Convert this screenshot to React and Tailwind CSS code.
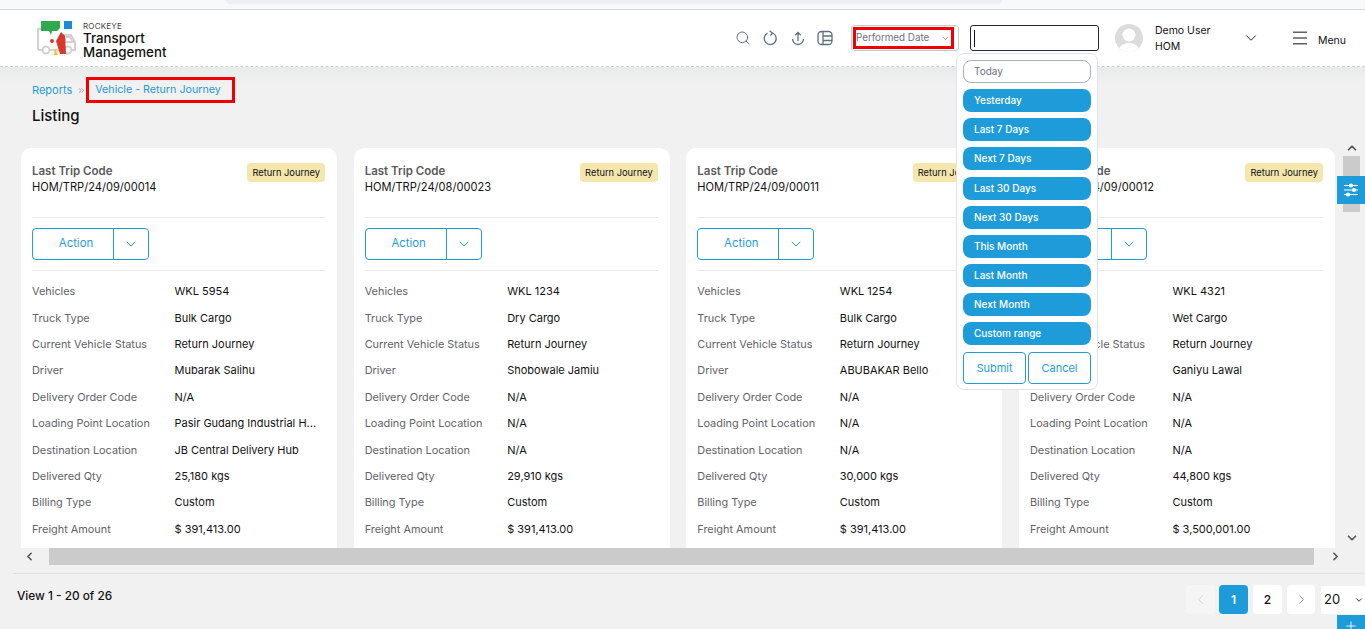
import React from "react";
import { Search, ChevronDown, ChevronUp, ChevronLeft, ChevronRight, Menu, Plus, ChevronsRight } from "lucide-react";

const cards = [
  { code: "HOM/TRP/24/09/00014", v: "WKL 5954", t: "Bulk Cargo", d: "Mubarak Salihu", lp: "Pasir Gudang Industrial H...", dl: "JB Central Delivery Hub", q: "25,180 kgs", f: "$ 391,413.00" },
  { code: "HOM/TRP/24/08/00023", v: "WKL 1234", t: "Dry Cargo", d: "Shobowale Jamiu", lp: "N/A", dl: "N/A", q: "29,910 kgs", f: "$ 391,413.00" },
  { code: "HOM/TRP/24/09/00011", v: "WKL 1254", t: "Bulk Cargo", d: "ABUBAKAR Bello", lp: "N/A", dl: "N/A", q: "30,000 kgs", f: "$ 391,413.00" },
  { code: "HOM/TRP/24/09/00012", v: "WKL 4321", t: "Wet Cargo", d: "Ganiyu Lawal", lp: "N/A", dl: "N/A", q: "44,800 kgs", f: "$ 3,500,001.00" },
];

function Row({ label, value }) {
  return (
    <div className="flex h-[26.4px] items-center leading-4">
      <span className="w-[142.5px] shrink-0 whitespace-nowrap text-[10.9px] text-[#5f6368]">{label}</span>
      <span className="whitespace-nowrap text-[11px] text-[#111]">{value}</span>
    </div>
  );
}

function Card({ c }) {
  return (
    <div className="h-[420px] w-[316px] shrink-0 rounded-t-[10px] bg-white pl-[11px] pr-[12px] pt-[15px] text-[11px]">
      <div className="flex h-[55px] items-start justify-between border-b border-[#e9e9ec]">
        <div>
          <div className="text-[11.5px] font-semibold leading-4 text-[#5a5a5a]">Last Trip Code</div>
          <div className="text-[11.1px] leading-4 text-[#111]">{c.code}</div>
        </div>
        <span className="rounded-[4px] bg-[#f4e6ad] px-[5px] py-[3px] text-[9.3px] leading-[13px] text-[#111]">Return Journey</span>
      </div>
      <div className="flex h-[53px] items-center border-b border-[#e9e9ec]">
        <div className="flex h-[32px] w-[117px] rounded-[4px] border border-[#1e9cd9] text-[#1e9cd9]">
          <div className="flex w-[81px] items-center justify-center border-r border-[#1e9cd9] pl-[6px] text-[11.4px]">Action</div>
          <div className="flex flex-1 items-center justify-center"><ChevronDown size={16} strokeWidth={1.5} /></div>
        </div>
      </div>
      <div className="pt-[7px]">
        <Row label="Vehicles" value={c.v} />
        <Row label="Truck Type" value={c.t} />
        <Row label="Current Vehicle Status" value="Return Journey" />
        <Row label="Driver" value={c.d} />
        <Row label="Delivery Order Code" value="N/A" />
        <Row label="Loading Point Location" value={c.lp} />
        <Row label="Destination Location" value={c.dl} />
        <Row label="Delivered Qty" value={c.q} />
        <Row label="Billing Type" value="Custom" />
        <Row label="Freight Amount" value={c.f} />
      </div>
    </div>
  );
}

function Logo() {
  return (
    <svg width="42" height="36" viewBox="0 0 42 36" className="shrink-0">
      <g fill="none" stroke="#d2d2d2" strokeWidth="2">
        <path d="M2 30V9h10M2 30h4M14 30h15M36 30h3v-8l-4-7h-8v15" />
        <path d="M29 17h5l3 5h-8z" />
        <circle cx="10" cy="30" r="3.5" />
        <circle cx="32" cy="30" r="3.5" />
      </g>
      <path d="M5 1h19v7l-3 3h-5l-1 4-2-4H5z" fill="#2fa84f" />
      <rect x="28" y="1" width="8" height="8" fill="#1e88d9" />
      <path d="M25 12l-5 9 4 13 6 0-1-18z" fill="#d9382c" />
      <circle cx="16" cy="21" r="2" fill="#d9382c" />
      <path d="M19 28l3 7h-4z" fill="#f2c230" />
    </svg>
  );
}

const ranges = ["Yesterday", "Last 7 Days", "Next 7 Days", "Last 30 Days", "Next 30 Days", "This Month", "Last Month", "Next Month", "Custom range"];

function Popover() {
  return (
    <div className="absolute left-[956px] top-[53px] z-20 flex h-[337px] w-[142px] flex-col gap-[6.15px] rounded-[8px] border border-[#dfe3ea] bg-white pl-[6px] pr-[6px] pt-[6px] text-[10px]">
      <div className="flex h-[23px] items-center rounded-[8px] border border-[#a9b1c0] bg-white pl-[10px] text-[#6b7280]">Today</div>
      {ranges.map((r) => (
        <div key={r} className="flex h-[23px] items-center rounded-[8px] bg-[#1e9cd9] pl-[11px] font-medium text-white">{r}</div>
      ))}
      <div className="mt-[1px] flex gap-[2px]">
        <div className="flex h-[32px] flex-1 items-center justify-center rounded-[4px] border border-[#1e9cd9] text-[11px] text-[#1e9cd9]">Submit</div>
        <div className="flex h-[32px] flex-1 items-center justify-center rounded-[4px] border border-[#1e9cd9] text-[11px] text-[#1e9cd9]">Cancel</div>
      </div>
    </div>
  );
}

export default function App() {
  return (
    <div className="relative flex h-[629px] w-[1365px] flex-col overflow-hidden bg-[#f1f1f1] font-['Inter',sans-serif] text-[#111]">
      {/* browser strip */}
      <div className="h-[10px] shrink-0 border-b border-[#d5d7da] bg-[#f8f9fb] pl-[226px]">
        <div className="h-[4px] w-[776px] rounded-b-[6px] bg-[#eeeff3]" />
      </div>

      {/* header */}
      <header className="flex h-[57px] shrink-0 items-center border-b border-dashed border-[#cfcfcf] bg-white pl-[36px] pr-[19px]">
        <Logo />
        <div className="ml-[5px] pt-[5px] text-[#111]">
          <div className="text-[8px] leading-[9px] tracking-wide text-[#444]">ROCKEYE</div>
          <div className="text-[13.3px] font-medium leading-[14px]">Transport</div>
          <div className="text-[13.3px] font-medium leading-[14px]">Management</div>
        </div>
        <div className="ml-auto flex items-center text-[#5e6f80]">
          <Search size={16} strokeWidth={1.5} />
          <svg width="15" height="16" viewBox="0 0 15 16" fill="none" stroke="currentColor" strokeWidth="1.3" className="ml-[12px]">
            <path d="M4.5 3.2A6 6 0 1 0 9.5 3" />
            <path d="M6.5 0.8L9.5 3L7.5 5.5" />
          </svg>
          <svg width="14" height="15" viewBox="0 0 14 15" fill="none" stroke="currentColor" strokeWidth="1.3" className="ml-[13px]">
            <path d="M7 10V1.5M4.2 4.2L7 1.5L9.8 4.2" />
            <path d="M1.5 8a5.5 5.5 0 0 0 11 0" />
          </svg>
          <svg width="16" height="16" viewBox="0 0 16 16" fill="none" stroke="currentColor" strokeWidth="1.3" className="ml-[12px]">
            <rect x="1" y="1.5" width="14" height="13" rx="3.5" />
            <path d="M6 1.5v13M6 6h9M6 10.5h9" />
          </svg>
        </div>
        <div className="ml-[18px] flex h-[26px] w-[108px] items-center rounded-[3px] border border-[#c8ccd2] p-[1px]">
          <div className="flex h-[22px] w-[101px] items-center justify-between border-[3px] border-[#f00000] pr-[1px] text-[9.8px] text-[#6b7280]">
            <span className="whitespace-nowrap">Performed Date</span>
            <ChevronDown size={9} />
          </div>
        </div>
        <div className="ml-[11px] flex h-[26px] w-[129px] items-center rounded-[3px] border border-[#1f2937] pl-[3px]">
          <div className="h-[17px] w-px bg-[#111]" />
        </div>
        <div className="ml-[16px] flex h-[28px] w-[28px] shrink-0 items-end justify-center overflow-hidden rounded-full bg-[#dcdcdc]">
          <svg width="28" height="28" viewBox="0 0 28 28"><circle cx="14" cy="11" r="6.5" fill="#fff" /><ellipse cx="14" cy="26" rx="10" ry="7" fill="#fff" /></svg>
        </div>
        <div className="ml-[12px] w-[87px] pt-[2px] text-[10.5px] leading-4">
          <div>Demo User</div>
          <div>HOM</div>
        </div>
        <ChevronDown size={18} strokeWidth={1.2} />
        <Menu size={20} strokeWidth={1.2} className="ml-[30px]" />
        <span className="ml-[8px] pt-[5px] text-[10.5px]">Menu</span>
      </header>

      <Popover />

      {/* title */}
      <div className="h-[81px] shrink-0 bg-gradient-to-b from-[#e9eaea] to-[#f1f1f1] to-20% pl-[32px] pt-[10px]">
        <div className="flex h-[26px] items-center text-[11px] text-[#1e9cd9]">
          <span>Reports</span>
          <ChevronsRight size={9} className="ml-[5px] text-[#888]" />
          <span className="flex h-[26px] w-[149px] items-center border-[3px] border-[#f00000] pl-[6px] text-[10.7px] whitespace-nowrap">Vehicle - Return Journey</span>
        </div>
        <div className="mt-[3px] text-[15px] font-medium leading-5">Listing</div>
      </div>

      {/* content */}
      <div className="flex h-[400px] shrink-0">
        <div className="flex w-[1343px] gap-[16.67px] overflow-hidden pl-[21px]">
          {cards.map((c) => <Card key={c.code} c={c} />)}
        </div>
        <div className="-mt-[10px] flex h-[410px] w-[17px] flex-col items-center text-[#555]">
          <ChevronUp size={14} strokeWidth={3} className="mt-[3px]" />
          <div className="mt-[1px] h-[56px] w-[17px] bg-[#cbcbcb]" />
          <ChevronDown size={14} strokeWidth={3} className="mt-auto mb-[3px]" />
        </div>
      </div>
      <div className="flex h-[17px] shrink-0 items-center pl-[14px]">
        <div className="flex w-[35px] justify-center pr-[4px] text-[#555]"><ChevronLeft size={13} strokeWidth={3} /></div>
        <div className="h-[17px] w-[1265px] bg-[#cbcbcb]" />
        <div className="flex w-[42px] justify-center text-[#555]"><ChevronRight size={13} strokeWidth={3} /></div>
      </div>

      <div className="absolute left-[1337px] top-[176px] z-10 flex h-[28px] w-[28px] items-center justify-center bg-[#1e9cd9] text-white">
        <svg width="16" height="14" viewBox="0 0 16 14" fill="none" stroke="currentColor" strokeWidth="1.2">
          <path d="M1 2.5h14M1 7h14M1 11.5h14" />
          <circle cx="8" cy="2.5" r="1.5" fill="currentColor" />
          <circle cx="11" cy="7" r="1.5" fill="currentColor" />
          <circle cx="5" cy="11.5" r="1.5" fill="currentColor" />
        </svg>
      </div>

      {/* footer */}
      <footer className="ml-[13px] mt-[8px] flex h-[48px] items-start justify-between border-t border-[#dfdfe8] pt-[11px]">
        <span className="pl-[4px] pt-[1px] text-[11.8px] font-medium leading-5">View 1 - 20 of 26</span>
        <div className="flex items-center">
          <div className="flex h-[29px] w-[29px] items-center justify-center rounded-[4px] bg-[#f5f5f5] text-[#ccc]"><ChevronLeft size={15} strokeWidth={1.3} /></div>
          <div className="ml-[4px] flex h-[29px] w-[29px] items-center justify-center rounded-[4px] bg-[#1e9cd9] text-[12px] font-semibold text-white">1</div>
          <div className="ml-[5px] flex h-[29px] w-[29px] items-center justify-center rounded-[4px] bg-white text-[12px] font-medium">2</div>
          <div className="ml-[5px] flex h-[29px] w-[28px] items-center justify-center rounded-[4px] bg-white text-[#777]"><ChevronRight size={15} strokeWidth={1.3} /></div>
          <div className="ml-[6px] flex h-[28px] w-[44px] items-center justify-between rounded-[3px] bg-white pl-[3px] pr-[1px] text-[13px]">
            <span>20</span><ChevronDown size={10} strokeWidth={2} />
          </div>
        </div>
      </footer>
      <div className="absolute left-[1337px] top-[615px] flex h-[14px] w-[28px] items-start justify-center overflow-hidden bg-[#1e9cd9] text-white">
        <Plus size={14} strokeWidth={1.5} className="mt-[4px]" />
      </div>
    </div>
  );
}
